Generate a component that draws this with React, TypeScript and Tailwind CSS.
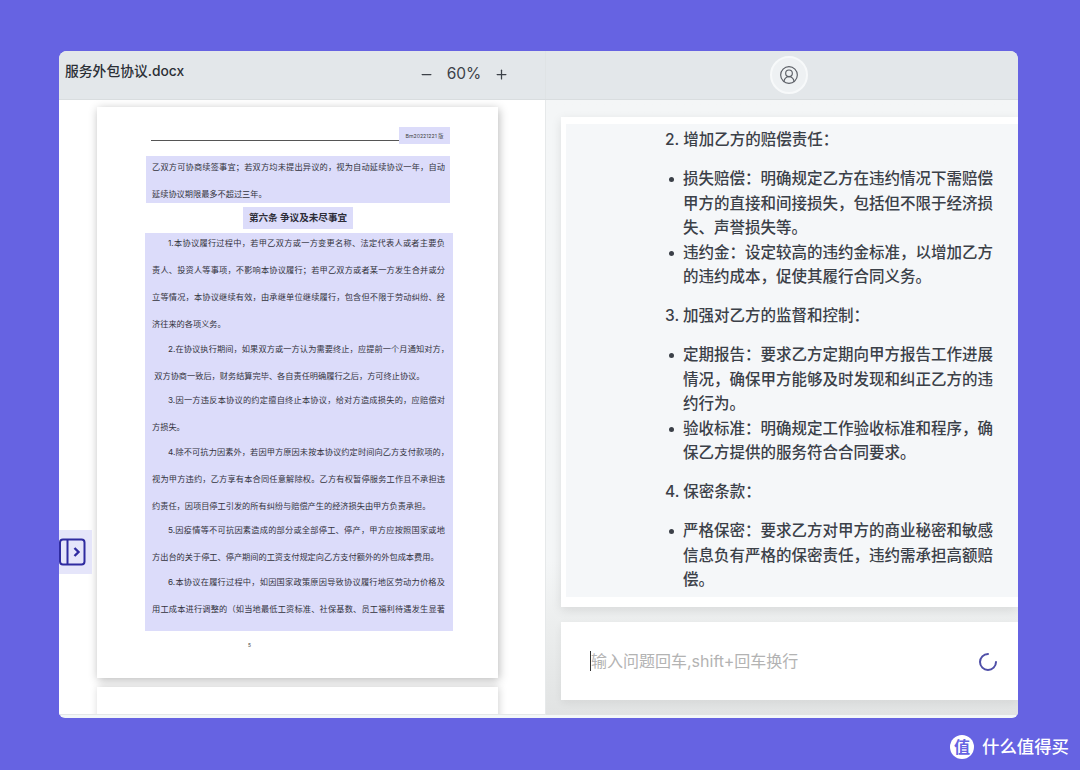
import { Minus, Plus, CircleUserRound } from "lucide-react";

const sans = "font-['Inter','Noto_Sans_CJK_SC',sans-serif]";

// full = stretched across the column, wide = runs past the right margin, indent = first line of a clause
type DocLine = { text: string; full?: boolean; wide?: boolean; indent?: boolean };

const clauses: DocLine[][] = [
  [
    { text: "1.本协议履行过程中，若甲乙双方或一方变更名称、法定代表人或者主要负", full: true, indent: true },
    { text: "责人、投资人等事项，不影响本协议履行；若甲乙双方或者某一方发生合并或分", full: true },
    { text: "立等情况，本协议继续有效，由承继单位继续履行，包含但不限于劳动纠纷、经", full: true },
    { text: "济往来的各项义务。" },
  ],
  [
    { text: "2.在协议执行期间，如果双方或一方认为需要终止，应提前一个月通知对方，", full: true, wide: true, indent: true },
    { text: " 双方协商一致后，财务结算完毕、各自责任明确履行之后，方可终止协议。" },
  ],
  [
    { text: "3.因一方违反本协议的约定擅自终止本协议，给对方造成损失的，应赔偿对", full: true, indent: true },
    { text: "方损失。" },
  ],
  [
    { text: "4.除不可抗力因素外，若因甲方原因未按本协议约定时间向乙方支付款项的，", full: true, wide: true, indent: true },
    { text: "视为甲方违约，乙方享有本合同任意解除权。乙方有权暂停服务工作且不承担违", full: true },
    { text: "约责任，因项目停工引发的所有纠纷与赔偿产生的经济损失由甲方负责承担。" },
  ],
  [
    { text: "5.因疫情等不可抗因素造成的部分或全部停工、停产，甲方应按照国家或地", full: true, indent: true },
    { text: "方出台的关于停工、停产期间的工资支付规定向乙方支付额外的外包成本费用。" },
  ],
  [
    { text: "6.本协议在履行过程中，如因国家政策原因导致协议履行地区劳动力价格及", full: true, indent: true },
    { text: "用工成本进行调整的（如当地最低工资标准、社保基数、员工福利待遇发生显著", full: true },
  ],
];

const Line = ({ line }: { line: DocLine }) => {
  return (
    <p
      className={`whitespace-pre text-[8.2px] leading-[18px] text-[#33333d] ${line.full ? "[text-align-last:justify]" : ""} ${line.wide ? "w-[297px]" : "w-[293px]"} ${line.indent ? "pl-[16px]" : ""}`}
    >
      {line.text}
    </p>
  );
};

const DocPage = () => {
  return (
    <div className="ml-[38px] w-[401px] h-[571px] mt-[7px] bg-white shadow-[1px_2px_9px_rgba(0,0,0,0.28)] pt-[20px]">
      <div className="ml-[54px] w-[295px] h-[14px] border-b border-[#555] flex justify-end">
        <div className="h-[17px] w-[51px] -mr-[4px] bg-[#dcdcfa] text-[5.2px] leading-[19px] text-center text-[#444]">
          Bm20221221 版
        </div>
      </div>
      <div className="ml-[49px] mt-[15px] w-[304px] h-[47px] bg-[#dcdcfa] pl-[6px] pt-[2px] flex flex-col gap-[9px]">
        <Line line={{ text: "乙双方可协商续签事宜；若双方均未提出异议的，视为自动延续协议一年，自动", full: true }} />
        <Line line={{ text: "延续协议期限最多不超过三年。" }} />
      </div>
      <div className="ml-[146px] mt-[4px] w-[110px] h-[22px] bg-[#dcdcfa] text-center text-[9.6px] font-bold leading-[21px] text-[#2c2c38]">
        第六条 争议及未尽事宜
      </div>
      <div className="ml-[48px] mt-[4px] w-[308px] h-[398px] bg-[#dcdcfa] pl-[7px] pt-[1px] flex flex-col gap-[6.5px]">
        {clauses.map((clause, i) => (
          <div key={i} className="flex flex-col gap-[9px]">
            {clause.map((line, j) => (
              <Line key={j} line={line} />
            ))}
          </div>
        ))}
      </div>
      <p className="ml-[151px] mt-[11px] text-[5px] leading-[6px] text-[#444]">5</p>
    </div>
  );
};

const answer = [
  {
    title: "2. 增加乙方的赔偿责任：",
    items: [
      ["损失赔偿：明确规定乙方在违约情况下需赔偿", "甲方的直接和间接损失，包括但不限于经济损", "失、声誉损失等。"],
      ["违约金：设定较高的违约金标准，以增加乙方", "的违约成本，促使其履行合同义务。"],
    ],
  },
  {
    title: "3. 加强对乙方的监督和控制：",
    items: [
      ["定期报告：要求乙方定期向甲方报告工作进展", "情况，确保甲方能够及时发现和纠正乙方的违", "约行为。"],
      ["验收标准：明确规定工作验收标准和程序，确", "保乙方提供的服务符合合同要求。"],
    ],
  },
  {
    title: "4. 保密条款：",
    items: [["严格保密：要求乙方对甲方的商业秘密和敏感", "信息负有严格的保密责任，违约需承担高额赔", "偿。"]],
  },
];

const Answer = () => {
  return (
    <div className="ml-[15px] mt-[17px] h-[490px] bg-white pl-[5px] pt-[7px] pb-[10px] shadow-[0_3px_10px_rgba(0,0,0,0.1)]">
      <div className="h-full bg-[#f5f7f9] pl-[99px] pt-[4px] text-[15.5px] leading-[24.4px] font-medium text-[#3b4048] flex flex-col gap-[14.6px]">
        {answer.map((section) => (
          <div key={section.title} className="flex flex-col gap-[15px]">
            <p className="whitespace-nowrap">{section.title}</p>
            <ul>
              {section.items.map((item) => (
                <li key={item[0]} className="flex">
                  <span className="w-[18px] shrink-0 flex justify-start pl-[4px] pt-[10px]">
                    <span className="w-[5px] h-[5px] rounded-full bg-[#3b4048]" />
                  </span>
                  <div>
                    {item.map((line) => (
                      <p key={line} className="whitespace-nowrap">{line}</p>
                    ))}
                  </div>
                </li>
              ))}
            </ul>
          </div>
        ))}
      </div>
    </div>
  );
};

export default function App() {
  return (
    <div className={`w-[1080px] h-[770px] bg-[#6663e2] pt-[51px] pl-[59px] overflow-hidden ${sans}`}>
      <div className="w-[959px] h-[667px] rounded-t-lg rounded-b-md overflow-hidden bg-[#f3f7f8] flex flex-col">
        <div className="h-[49px] shrink-0 bg-[#e3e7ea] flex border-b border-[#d9dddf]">
          <div className="w-[486px] relative">
            <h1 className="pl-[6px] pt-[10px] text-[13.8px] leading-[20px] font-medium text-[#2b2f36]">服务外包协议.docx</h1>
            <div className="absolute left-[360px] top-[13px] flex items-center text-[#3c4148]">
              <Minus size={15} strokeWidth={2} />
              <span className="w-[60px] text-center text-[15.5px] leading-[20px]">60%</span>
              <Plus size={15} strokeWidth={2} />
            </div>
          </div>
          <div className="flex-1 flex justify-center items-start pt-[5px] pl-[14px] border-l border-[#dfe3e5]">
            <div className="w-[38px] h-[38px] rounded-full bg-[#eef1f3] border-2 border-[#f7f9fa] flex items-center justify-center">
              <CircleUserRound size={20} strokeWidth={1.4} className="text-[#5b5f66]" />
            </div>
          </div>
        </div>

        <div className="h-[615px] shrink-0 flex overflow-hidden">
          <div className="w-[486px] bg-white relative overflow-hidden border-b border-[#e4e7e8]">
            <DocPage />
            <div className="ml-[38px] mt-[9px] w-[401px] h-[60px] bg-white shadow-[1px_0_8px_rgba(0,0,0,0.18)]" />
            <div className="absolute left-0 top-[430px] w-[33px] h-[44px] bg-[#e5e5fa] flex items-center">
              <svg width="27" height="28" viewBox="0 0 27 28" fill="none" stroke="#2f2ba0" strokeWidth="2">
                <rect x="1" y="1.5" width="24.5" height="25" rx="3" />
                <path d="M8.5 1.5v25" />
                <path d="M15.5 10l4 4-4 4" strokeWidth="2.4" />
              </svg>
            </div>
          </div>

          <div className="flex-1 border-l border-[#e6e9ea] bg-linear-to-b from-[#f4f6f7] from-75% via-[#eceeee] via-85% to-[#e1e3e3] overflow-hidden">
            <Answer />
            <div className="ml-[15px] mt-[15px] h-[78px] bg-white pl-[29px] pr-[20px] flex items-center justify-between shadow-[0_3px_8px_rgba(0,0,0,0.06)]">
              <span className="border-l-[1.5px] border-[#333] text-[16px] leading-[20px] text-[#b3b3b3] whitespace-nowrap">
                输入问题回车,shift+回车换行
              </span>
              <svg width="20" height="20" viewBox="0 0 20 20" fill="none" stroke="#4f4fa8" strokeWidth="2" className="mt-[2px]">
                <path d="M10 2a8 8 0 1 0 8 8" strokeLinecap="round" />
              </svg>
            </div>
          </div>
        </div>
      </div>

      <div className="w-[1010px] mt-[17px] flex justify-end items-center gap-[8px]">
        <div className="w-[24px] h-[24px] rounded-full bg-white flex items-center justify-center text-[16px] leading-none font-bold text-[#6663e2]">
          值
        </div>
        <span className="text-[17.4px] leading-[24px] font-medium text-white whitespace-nowrap">什么值得买</span>
      </div>
    </div>
  );
}
